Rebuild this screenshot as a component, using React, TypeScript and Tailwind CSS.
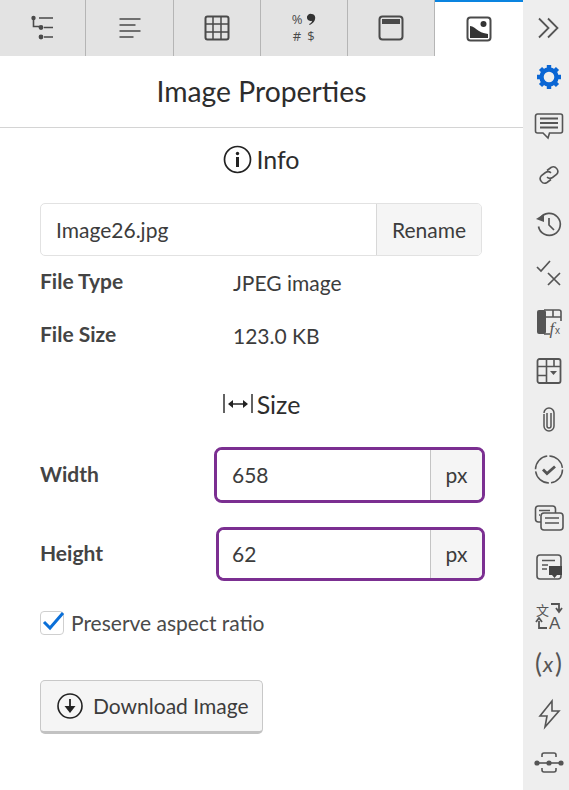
import React from "react";

const S = "#555";
function TabIcon({ children }: { children: React.ReactNode }) {
  return <svg width="28" height="28" viewBox="0 0 28 28" fill="none" stroke="#4a4a4a" strokeWidth="1.6">{children}</svg>;
}
function Side({ children, w = 34, vb = "-2 -2 34 34" }: { children: React.ReactNode; w?: number; vb?: string }) {
  return (
    <div className="h-[49px] flex items-center justify-center shrink-0">
      <svg width={w} height={w} viewBox={vb} fill="none" stroke={S} strokeWidth="1.6">{children}</svg>
    </div>
  );
}

function Tab({ active, cls, children }: { active?: boolean; cls: string; children: React.ReactNode }) {
  return (
    <div
      className={
        (active
          ? "h-14 flex items-center justify-center bg-white border-t-2 border-[#0a84e0] "
          : "h-14 flex items-center justify-center bg-[#e3e3e3] border-r border-[#b5b5b5] ") + cls
      }
    >
      {children}
    </div>
  );
}

function Heading({ icon, text }: { icon: React.ReactNode; text: string }) {
  return (
    <div className="flex items-center justify-center gap-[4px] text-[25px] leading-[32px] text-[#2d2d2d]">
      {icon}
      <span>{text}</span>
    </div>
  );
}

function UnitInput({ value, cls, pad }: { value: string; cls: string; pad: string }) {
  return (
    <div className={"flex border-[3px] border-[#7b2f91] rounded-[8px] overflow-hidden " + cls}>
      <div className={"flex-1 flex items-center text-[21px] text-[#3c3c3c] bg-white " + pad}>{value}</div>
      <div className="w-[52px] flex items-center justify-center text-[21px] text-[#3c3c3c] bg-[#f5f5f5] border-l border-[#c4c4c4]">px</div>
    </div>
  );
}

export default function App() {
  return (
    <div className="w-[569px] h-[790px] overflow-hidden flex bg-white text-[#3c3c3c]" style={{ fontFamily: '"Lato", "Open Sans", sans-serif' }}>
      <div className="w-[523px] shrink-0 flex flex-col">
        <div className="flex h-14">
          <Tab cls="w-[86px]">
            <TabIcon>
              <path d="M4.5 4v8.5h6M10 4h14M15 13.5h9M15 23h9" />
              <circle cx="4.5" cy="4" r="2.2" fill="#4a4a4a" stroke="none" />
              <circle cx="12" cy="13.5" r="2.4" fill="#4a4a4a" stroke="none" />
              <circle cx="12" cy="23" r="2.4" fill="#4a4a4a" stroke="none" />
            </TabIcon>
          </Tab>
          <Tab cls="w-[88px]">
            <TabIcon>
              <path d="M3.5 5h21M3.5 11h16M3.5 17h21M3.5 23h14" />
            </TabIcon>
          </Tab>
          <Tab cls="w-[87px]">
            <TabIcon>
              <rect x="2.5" y="2.5" width="23" height="23" rx="2" strokeWidth="2" />
              <path d="M10 2.5v23M18 2.5v23M2.5 10h23M2.5 18h23" strokeWidth="1.5" />
            </TabIcon>
          </Tab>
          <Tab cls="w-[87px]">
            <div className="w-[28px] grid grid-cols-2 text-[13px] leading-[17px] text-center text-[#4a4a4a] relative" style={{ fontFamily: '"Open Sans", sans-serif' }}>
              <span>%</span>
              <span className="flex items-center justify-center">
                <svg width="9" height="13" viewBox="0 0 9 13">
                  <path d="M4.5 1a3.6 3.6 0 013.7 3.8c0 3.4-2.6 6-5.6 7.2l-.5-.9c1.6-.9 2.8-2 3-3.4A3.6 3.6 0 114.5 1z" fill="#333" />
                </svg>
              </span>
              <span>#</span>
              <span>$</span>
            </div>
          </Tab>
          <Tab cls="w-[87px]">
            <TabIcon>
              <rect x="2.5" y="2.5" width="23" height="23" rx="3" strokeWidth="2" />
              <rect x="5" y="5" width="18" height="5" fill="#4a4a4a" stroke="none" />
            </TabIcon>
          </Tab>
          <Tab active cls="w-[88px]">
            <TabIcon>
              <rect x="2.5" y="2.5" width="23" height="23" rx="3" strokeWidth="2" />
              <path d="M5 11c3 0 6 3 9 5s6 2 9 3v4H5z" fill="#333" stroke="none" />
              <circle cx="18.5" cy="9" r="3" fill="#333" stroke="none" />
            </TabIcon>
          </Tab>
        </div>

        <div className="h-[72px] border-b border-[#d4d4d4] flex items-center justify-center text-[28.3px] text-[#2d2d2d]">Image Properties</div>

        <div className="px-10 pt-[15px] flex flex-col">
          <Heading
            text="Info"
            icon={
              <svg width="29" height="29" viewBox="0 0 29 29" fill="none">
                <circle cx="14.5" cy="14.5" r="13" stroke="#222" strokeWidth="1.7" />
                <circle cx="14.5" cy="8.5" r="1.7" fill="#222" />
                <rect x="13" y="12" width="3" height="10" fill="#222" />
              </svg>
            }
          />
          <div className="mt-[28px] h-[53px] flex border border-[#e2e2e2] rounded-[5px] overflow-hidden w-[442px]">
            <div className="flex-1 flex items-center pl-[15px] text-[21px] text-[#3c3c3c]">Image26.jpg</div>
            <div className="w-[105px] flex items-center justify-center text-[21px] text-[#3c3c3c] bg-[#f5f5f5] border-l border-[#d8d8d8]">Rename</div>
          </div>

          <div className="mt-[8px] flex items-center h-[34px]">
            <div className="w-[193px] text-[21px] font-bold text-[#444]">File Type</div>
            <div className="text-[21px] mt-[3px]">JPEG image</div>
          </div>
          <div className="mt-[19px] flex items-center h-[34px]">
            <div className="w-[193px] text-[21px] font-bold text-[#444]">File Size</div>
            <div className="text-[21px] mt-[3px]">123.0 KB</div>
          </div>

          <div className="mt-[37px]">
            <Heading
              text="Size"
              icon={
                <svg width="30" height="22" viewBox="0 0 30 22" fill="none" stroke="#222">
                  <path d="M1 1v19M29 1v19" strokeWidth="1.4" />
                  <path d="M6 11h18" strokeWidth="1.5" />
                  <path d="M5 11l5-4v8zM25 11l-5-4v8z" fill="#222" stroke="none" />
                </svg>
              }
            />
          </div>

          <div className="mt-[27px] flex items-center -mr-[3px]">
            <div className="w-[174px] text-[21px] font-bold text-[#444] shrink-0 -mt-[2px]">Width</div>
            <UnitInput value="658" cls="w-[271px] h-[56px]" pad="pl-[15px]" />
          </div>
          <div className="mt-[24px] flex items-center -mr-[3px]">
            <div className="w-[176px] text-[21px] font-bold text-[#444] shrink-0 -mt-[2px]">Height</div>
            <UnitInput value="62" cls="w-[269px] h-[54px]" pad="pl-[13px]" />
          </div>

          <div className="mt-[26px] flex items-center">
            <div className="w-6 h-6 border border-[#cfcfcf] rounded-[4px] relative shrink-0">
              <svg className="absolute left-[1px] -top-[1px]" width="23" height="20" viewBox="0 0 23 20" fill="none">
                <path d="M2 11l6 6L21 2" stroke="#0a6fd8" strokeWidth="3" />
              </svg>
            </div>
            <span className="ml-[7px] text-[21px] text-[#4a4a4a]">Preserve aspect ratio</span>
          </div>

          <div className="mt-[41px] w-[223px] h-[54px] flex items-center pl-[16px] gap-[10px] bg-[#f5f5f5] border border-[#c8c8c8] border-b-[3px] border-b-[#c2c2c2] rounded-[5px] text-[21px] text-[#3c3c3c]">
            <svg width="26" height="26" viewBox="0 0 26 26" fill="none" stroke="#222">
              <circle cx="13" cy="13" r="12" strokeWidth="1.6" />
              <path d="M13 6v11" strokeWidth="1.8" />
              <path d="M7.5 13h11L13 20z" fill="#222" stroke="none" />
            </svg>
            <span>Download Image</span>
          </div>
        </div>
      </div>

      <div className="w-[46px] shrink-0 bg-[#eeeeee] flex flex-col pt-[3px] pl-[6px]">
        <Side>
          <path d="M5 5.500l9.500 9.500L5 24.500M14 5.500l9.500 9.500L14 24.500" strokeWidth="1.8" />
        </Side>
        <Side>
          <g stroke="#0a66d4">
            <circle cx="15" cy="15" r="7.500" strokeWidth="4.400" />
            <path d="M15 3v5M15 22v5M3 15h5M22 15h5M6.500 6.500l3.600 3.600M19.900 19.900l3.600 3.600M6.500 23.500l3.600-3.600M19.900 10.100l3.600-3.600" strokeWidth="4.400" />
          </g>
        </Side>
        <Side>
          <path d="M1.500 5a2 2 0 012-2h23a2 2 0 012 2v15a2 2 0 01-2 2H15.500L14 27l-5-5H3.500a2 2 0 01-2-2z" />
          <path d="M6 7.500h18M6 12h18M6 16.500h18" strokeWidth="1.900" />
        </Side>
        <Side>
          <path d="M13 10.500l4-3a4.500 4.500 0 015.500 7l-4 3a4.500 4.500 0 01-5.500-.3" />
          <path d="M17 19.500l-4 3a4.500 4.500 0 01-5.500-7l4-3a4.500 4.500 0 015.500.3" />
        </Side>
        <Side>
          <path d="M6 9.500a11 11 0 11-1.500 8" strokeWidth="1.700" />
          <path d="M2 10l8-5v8z" fill={S} stroke="none" />
          <path d="M15 9v7l5 5" strokeWidth="1.700" />
        </Side>
        <Side>
          <path d="M3 9l4 4 9-10M14 15l12 12M26 15L14 27" strokeWidth="1.700" />
        </Side>
        <Side>
          <rect x="3" y="3" width="9" height="24" rx="2" fill={S} stroke="none" />
          <path d="M10 3h15a2 2 0 012 2v9M12 10h15M19 3v7M10 27h6" strokeWidth="1.600" />
          <text x="15.500" y="27" fontSize="17" fontStyle="italic" fontFamily="Liberation Serif" fill={S} stroke="none">f</text>
          <text x="21" y="27" fontSize="10" fontFamily="Liberation Sans" fill={S} stroke="none">x</text>
        </Side>
        <Side>
          <rect x="3.500" y="3" width="23" height="24" rx="2" strokeWidth="1.800" />
          <path d="M3.500 10.500h23M3.500 19.500h9M12.500 3v24M20 3v7.500" strokeWidth="1.600" />
          <path d="M16 15h7l-3.500 4z" fill={S} stroke="none" />
        </Side>
        <Side>
          <path d="M10 9v12a5 5 0 0010 0V8a5 5 0 00-10 0M13 8v13a2 2 0 004 0V8" strokeWidth="1.500" />
        </Side>
        <Side>
          <circle cx="15" cy="15.500" r="13.500" strokeWidth="1.500" strokeDasharray="19 2.200" />
          <path d="M9 15.500l4 4 8-7" strokeWidth="2.800" />
        </Side>
        <Side>
          <rect x="1.500" y="3" width="20" height="16" rx="3" />
          <rect x="7" y="10" width="22" height="17" rx="3" fill="#eeeeee" />
          <path d="M5 7.500h11M5 12h1M11 15h14M11 20h14" />
        </Side>
        <Side>
          <rect x="3" y="3" width="24" height="24" rx="3" />
          <path d="M8 8.500h13M8 13h6M8 17h5" />
          <path d="M15 14h13v9h-5l-2.500 3-2.500-3h-3z" fill="#444" stroke="none" />
        </Side>
        <Side>
          <text x="2" y="14" fontSize="13" fontFamily="Noto Sans CJK SC" fill={S} stroke="none">文</text>
          <text x="15" y="28" fontSize="17" fontFamily="Liberation Sans" fill={S} stroke="none">A</text>
          <path d="M17 3h8v7M22 7l3 4 3-4" strokeWidth="1.800" />
          <path d="M13 27H5v-7M2 21l3-4 3 4" strokeWidth="1.800" />
        </Side>
        <Side>
          <text x="1" y="23" fontSize="26" fontFamily="Lato" fill={S} stroke="none">(</text>
          <text x="9" y="22" fontSize="22" fontStyle="italic" fontFamily="Lato" fill={S} stroke="none">x</text>
          <text x="21" y="23" fontSize="26" fontFamily="Lato" fill={S} stroke="none">)</text>
        </Side>
        <Side>
          <path d="M18 2L6 17h7l-2 11 14-16h-7z" strokeWidth="1.600" />
        </Side>
        <Side>
          <path d="M8 9V7a2 2 0 012-2h10a2 2 0 012 2v2M8 20v2a2 2 0 002 2h10a2 2 0 002-2v-2" strokeWidth="1.600" />
          <path d="M3 15h24" strokeWidth="1.600" />
          <circle cx="3" cy="15" r="2.600" fill={S} stroke="none" />
          <circle cx="15" cy="15" r="2.600" fill={S} stroke="none" />
          <circle cx="27" cy="15" r="2.600" fill={S} stroke="none" />
        </Side>
      </div>
    </div>
  );
}
